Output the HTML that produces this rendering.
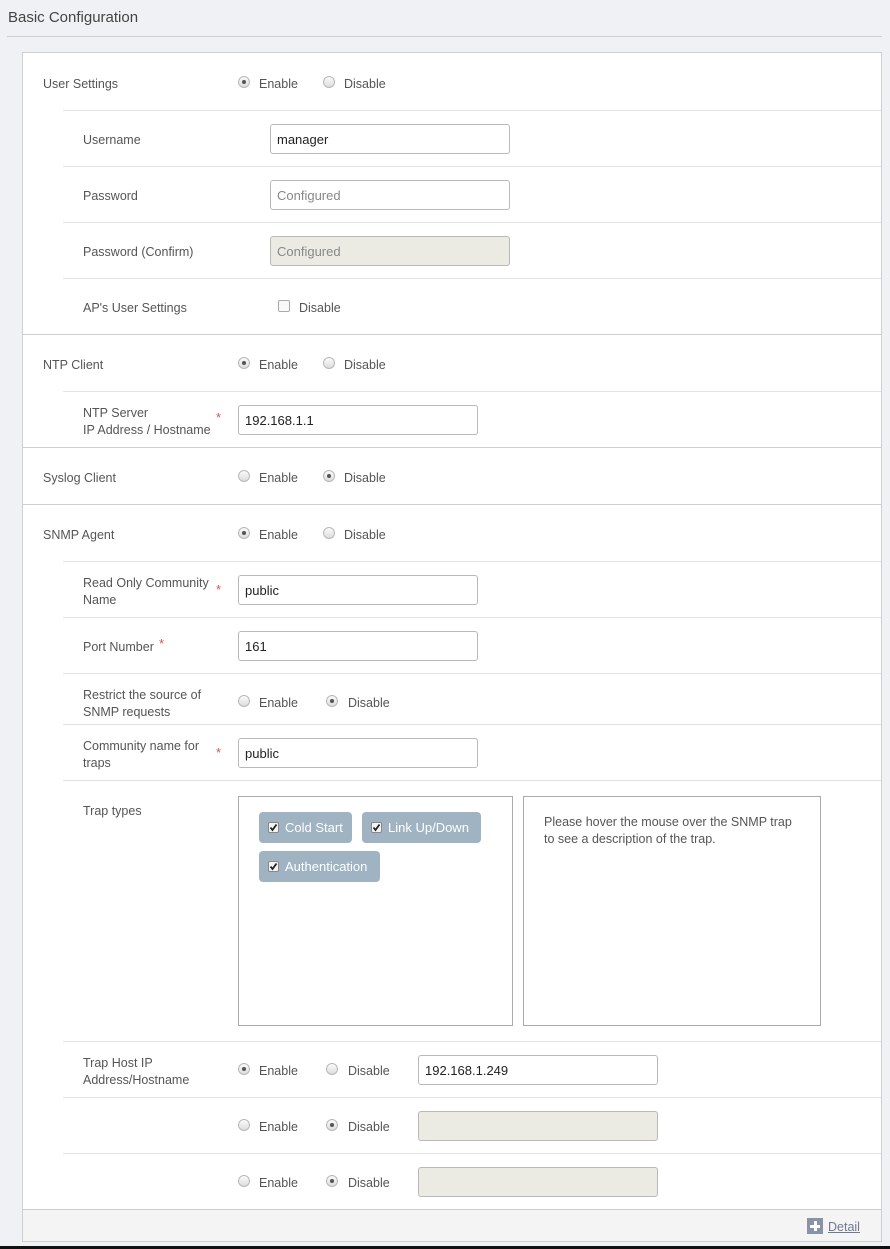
<!DOCTYPE html>
<html><head><meta charset="utf-8"><style>
*{box-sizing:border-box;margin:0;padding:0}
body{width:890px;height:1249px;background:#f0f1f5;font-family:"Liberation Sans",sans-serif;font-size:12.5px;color:#555;position:relative;overflow:hidden}
.a{position:absolute}
.t{position:absolute;line-height:17px;white-space:nowrap;margin-top:1px}
.hl{position:absolute;height:1px;background:#e2e2e2}
.fl{position:absolute;height:1px;background:#cfcfcf;left:22px;width:860px}
.r{position:absolute;width:12px;height:12px;border-radius:50%;border:1px solid #b8b8b8;background:linear-gradient(#fafafa,#dcdcdc)}
.r.on::after{content:"";position:absolute;left:3px;top:3px;width:4px;height:4px;border-radius:50%;background:#555}
.in{position:absolute;height:30px;border:1px solid #b9b9b9;border-radius:3px;background:#fff;padding-left:6px;line-height:29px;color:#222;font-size:13px}
.in.d{background:#ebebe4}
.st{color:#d9534f;position:absolute;font-size:13px}
.tag{position:absolute;height:31px;background:#9fb3c3;border-radius:4px;color:#fff;font-size:13px;line-height:32px;padding-left:26px}
.cb{position:absolute;left:9px;top:10px;width:11px;height:11px;background:#f4f4f4;border:1px solid #888;border-radius:2px}
.cb svg{position:absolute;left:0;top:0}
</style></head><body>
<div class="t" style="left:8px;top:8px;font-size:15px;color:#444">Basic Configuration</div>
<div class="a" style="left:7px;top:36px;width:875px;height:1px;background:#cfd0d3"></div>
<div class="a" style="left:22px;top:52px;width:860px;height:1190px;background:#fff;border:1px solid #cfcfcf"></div>
<div class="a" style="left:23px;top:1210px;width:858px;height:31px;background:#f4f4f4"></div>
<div class="a" style="left:0;top:1246px;width:890px;height:3px;background:#111"></div>

<div class="t" style="left:43px;top:75px">User Settings</div>
<div class="r on" style="left:238px;top:76px"></div><div class="t" style="left:259px;top:75px">Enable</div>
<div class="r" style="left:323px;top:76px"></div><div class="t" style="left:344px;top:75px">Disable</div>
<div class="hl" style="left:63px;top:110px;width:818px"></div>
<div class="t" style="left:83px;top:131px">Username</div>
<div class="in" style="left:270px;top:124px;width:240px">manager</div>
<div class="hl" style="left:63px;top:166px;width:818px"></div>
<div class="t" style="left:83px;top:187px">Password</div>
<div class="in" style="left:270px;top:180px;width:240px;color:#888">Configured</div>
<div class="hl" style="left:63px;top:222px;width:818px"></div>
<div class="t" style="left:83px;top:243px">Password (Confirm)</div>
<div class="in d" style="left:270px;top:236px;width:240px;color:#888">Configured</div>
<div class="hl" style="left:63px;top:278px;width:818px"></div>
<div class="t" style="left:83px;top:299px">AP's User Settings</div>
<div class="a" style="left:278px;top:300px;width:12px;height:12px;border:1px solid #aaa;border-radius:2px;background:#f8f8f8"></div>
<div class="t" style="left:299px;top:299px">Disable</div>
<div class="fl" style="top:334px"></div>

<div class="t" style="left:43px;top:356px">NTP Client</div>
<div class="r on" style="left:238px;top:357px"></div><div class="t" style="left:259px;top:356px">Enable</div>
<div class="r" style="left:323px;top:357px"></div><div class="t" style="left:344px;top:356px">Disable</div>
<div class="hl" style="left:63px;top:391px;width:818px"></div>
<div class="t" style="left:83px;top:404px">NTP Server<br>IP Address / Hostname</div>
<div class="st" style="left:216px;top:410px">*</div>
<div class="in" style="left:238px;top:405px;width:240px">192.168.1.1</div>
<div class="fl" style="top:447px"></div>

<div class="t" style="left:43px;top:469px">Syslog Client</div>
<div class="r" style="left:238px;top:470px"></div><div class="t" style="left:259px;top:469px">Enable</div>
<div class="r on" style="left:323px;top:470px"></div><div class="t" style="left:344px;top:469px">Disable</div>
<div class="fl" style="top:504px"></div>

<div class="t" style="left:43px;top:526px">SNMP Agent</div>
<div class="r on" style="left:238px;top:527px"></div><div class="t" style="left:259px;top:526px">Enable</div>
<div class="r" style="left:323px;top:527px"></div><div class="t" style="left:344px;top:526px">Disable</div>
<div class="hl" style="left:63px;top:561px;width:818px"></div>
<div class="t" style="left:83px;top:574px">Read Only Community<br>Name</div>
<div class="st" style="left:216px;top:582px">*</div>
<div class="in" style="left:238px;top:575px;width:240px">public</div>
<div class="hl" style="left:63px;top:617px;width:818px"></div>
<div class="t" style="left:83px;top:638px">Port Number</div><div class="st" style="left:159px;top:636px">*</div>
<div class="in" style="left:238px;top:631px;width:240px">161</div>
<div class="hl" style="left:63px;top:673px;width:818px"></div>
<div class="t" style="left:83px;top:686px">Restrict the source of<br>SNMP requests</div>
<div class="r" style="left:238px;top:695px"></div><div class="t" style="left:259px;top:694px">Enable</div>
<div class="r on" style="left:326px;top:695px"></div><div class="t" style="left:348px;top:694px">Disable</div>
<div class="hl" style="left:63px;top:724px;width:818px"></div>
<div class="t" style="left:83px;top:737px">Community name for<br>traps</div>
<div class="st" style="left:216px;top:745px">*</div>
<div class="in" style="left:238px;top:738px;width:240px">public</div>
<div class="hl" style="left:63px;top:780px;width:818px"></div>
<div class="t" style="left:83px;top:802px">Trap types</div>
<div class="a" style="left:238px;top:796px;width:275px;height:230px;border:1px solid #aaa"></div>
<div class="tag" style="left:259px;top:812px;width:93px"><span class="cb"><svg width="9" height="9" viewBox="0 0 9 9"><path d="M1.5 4.5 L3.5 7 L7.5 1.5" stroke="#222" stroke-width="1.8" fill="none"/></svg></span>Cold Start</div>
<div class="tag" style="left:362px;top:812px;width:119px"><span class="cb"><svg width="9" height="9" viewBox="0 0 9 9"><path d="M1.5 4.5 L3.5 7 L7.5 1.5" stroke="#222" stroke-width="1.8" fill="none"/></svg></span>Link Up/Down</div>
<div class="tag" style="left:259px;top:851px;width:121px"><span class="cb"><svg width="9" height="9" viewBox="0 0 9 9"><path d="M1.5 4.5 L3.5 7 L7.5 1.5" stroke="#222" stroke-width="1.8" fill="none"/></svg></span>Authentication</div>
<div class="a" style="left:523px;top:796px;width:298px;height:230px;border:1px solid #aaa"></div>
<div class="t" style="left:544px;top:813px;white-space:normal;width:258px;line-height:17px">Please hover the mouse over the SNMP trap to see a description of the trap.</div>
<div class="hl" style="left:63px;top:1041px;width:818px"></div>
<div class="t" style="left:83px;top:1054px">Trap Host IP<br>Address/Hostname</div>
<div class="r on" style="left:238px;top:1063px"></div><div class="t" style="left:259px;top:1062px">Enable</div>
<div class="r" style="left:326px;top:1063px"></div><div class="t" style="left:348px;top:1062px">Disable</div>
<div class="in" style="left:418px;top:1055px;width:240px">192.168.1.249</div>
<div class="hl" style="left:63px;top:1097px;width:818px"></div>
<div class="r" style="left:238px;top:1119px"></div><div class="t" style="left:259px;top:1118px">Enable</div>
<div class="r on" style="left:326px;top:1119px"></div><div class="t" style="left:348px;top:1118px">Disable</div>
<div class="in d" style="left:418px;top:1111px;width:240px"></div>
<div class="hl" style="left:63px;top:1153px;width:818px"></div>
<div class="r" style="left:238px;top:1175px"></div><div class="t" style="left:259px;top:1174px">Enable</div>
<div class="r on" style="left:326px;top:1175px"></div><div class="t" style="left:348px;top:1174px">Disable</div>
<div class="in d" style="left:418px;top:1167px;width:240px"></div>
<div class="fl" style="top:1209px"></div>
<div class="a" style="left:807px;top:1218px;width:16px;height:16px;background:#8a93a5"><div class="a" style="left:7px;top:3px;width:3px;height:10px;background:#fff"></div><div class="a" style="left:3px;top:7px;width:10px;height:3px;background:#fff"></div></div>
<div class="t" style="left:828px;top:1218px;color:#6f7a8e;text-decoration:underline">Detail</div>
</body></html>
